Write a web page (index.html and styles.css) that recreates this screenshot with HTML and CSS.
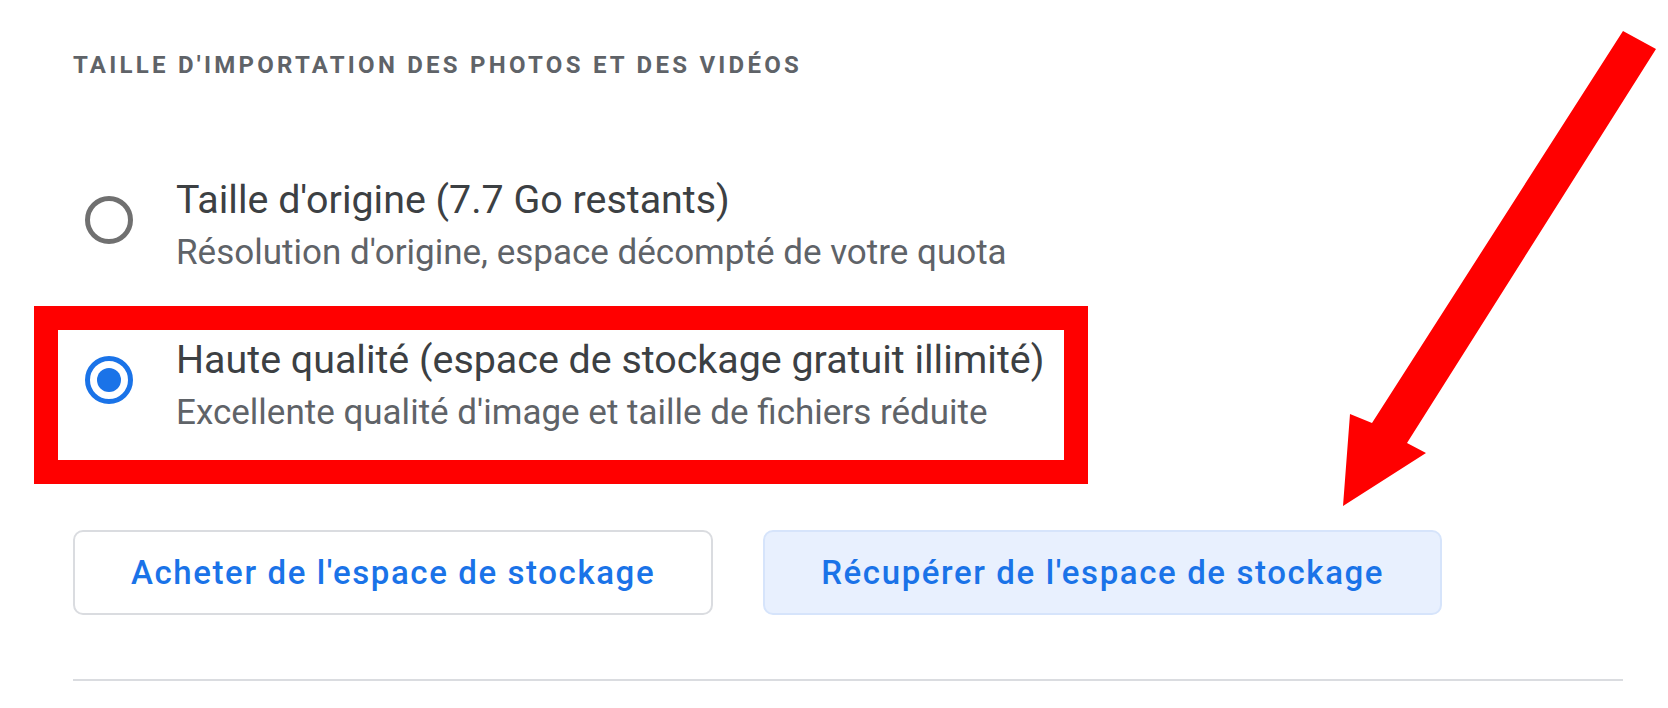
FILE: index.html
```html
<!DOCTYPE html>
<html lang="fr">
<head>
<meta charset="utf-8">
<title>Taille d'importation</title>
<link rel="stylesheet" href="styles.css">
</head>
<body>
<div class="page">
  <h2 class="section-title">Taille d'importation des photos et des vidéos</h2>
  <div class="options">
    <div class="option">
      <span class="radio"></span>
      <div class="option-text">
        <div class="option-title">Taille d'origine (7.7 Go restants)</div>
        <div class="option-desc">Résolution d'origine, espace décompté de votre quota</div>
      </div>
    </div>
    <div class="option">
      <span class="radio checked"><span class="dot"></span></span>
      <div class="option-text">
        <div class="option-title">Haute qualité (espace de stockage gratuit illimité)</div>
        <div class="option-desc">Excellente qualité d'image et taille de fichiers réduite</div>
      </div>
      <span class="highlight"></span>
    </div>
  </div>
  <div class="actions">
    <button class="btn btn-outline">Acheter de l'espace de stockage</button>
    <button class="btn btn-tonal">Récupérer de l'espace de stockage</button>
  </div>
  <hr class="divider">
  <svg class="arrow" width="1668" height="708" viewBox="0 0 1668 708" aria-hidden="true">
    <polygon points="1623,31 1656,49 1407,443 1426,453 1343,506 1350,414 1372,423" fill="#ff0000"/>
  </svg>
</div>
</body>
</html>
```
FILE: styles.css
```css
html, body {
  margin: 0;
  padding: 0;
  background: #ffffff;
}

.page {
  position: relative;
  width: 1668px;
  height: 708px;
  box-sizing: border-box;
  padding: 50px 45px 0 73px;
  font-family: Roboto, "Liberation Sans", Arial, sans-serif;
  overflow: hidden;
}

.section-title {
  margin: 0;
  font-size: 24px;
  line-height: 30px;
  font-weight: 700;
  letter-spacing: 3.25px;
  text-transform: uppercase;
  color: #5f6368;
}

.options {
  margin-top: 94px;
  display: flex;
  flex-direction: column;
  gap: 54px;
}

.option {
  position: relative;
  display: flex;
  align-items: flex-start;
}

.radio {
  flex: none;
  box-sizing: border-box;
  width: 48px;
  height: 48px;
  margin: 22px 43px 0 12px;
  border: 5px solid #707070;
  border-radius: 50%;
  display: flex;
  align-items: center;
  justify-content: center;
}

.radio.checked {
  border-color: #1a73e8;
}

.dot {
  width: 24px;
  height: 24px;
  border-radius: 50%;
  background: #1a73e8;
}

.option-title {
  font-size: 39.4px;
  line-height: 52px;
  color: #3c4043;
}

.option-desc {
  font-size: 35px;
  line-height: 54px;
  color: #5f6368;
}

.highlight {
  position: absolute;
  left: -39px;
  top: -28px;
  width: 1054px;
  height: 178px;
  box-sizing: border-box;
  border: 24px solid #ff0000;
  pointer-events: none;
}

.actions {
  margin-top: 90px;
  display: flex;
  gap: 50px;
}

.btn {
  height: 85px;
  box-sizing: border-box;
  padding: 0 56px;
  border-radius: 10px;
  font-family: Roboto, "Liberation Sans", Arial, sans-serif;
  font-size: 33px;
  font-weight: 500;
  letter-spacing: 1.6px;
  color: #1a73e8;
  cursor: pointer;
}

.btn-outline {
  background: #ffffff;
  border: 2px solid #dadce0;
}

.btn-tonal {
  background: #e8f0fe;
  border: 2px solid #d6e4fb;
}

.divider {
  margin: 64px 0 0 0;
  border: 0;
  height: 2px;
  background: #dadce0;
}

.arrow {
  position: absolute;
  left: 0;
  top: 0;
  pointer-events: none;
}
```
